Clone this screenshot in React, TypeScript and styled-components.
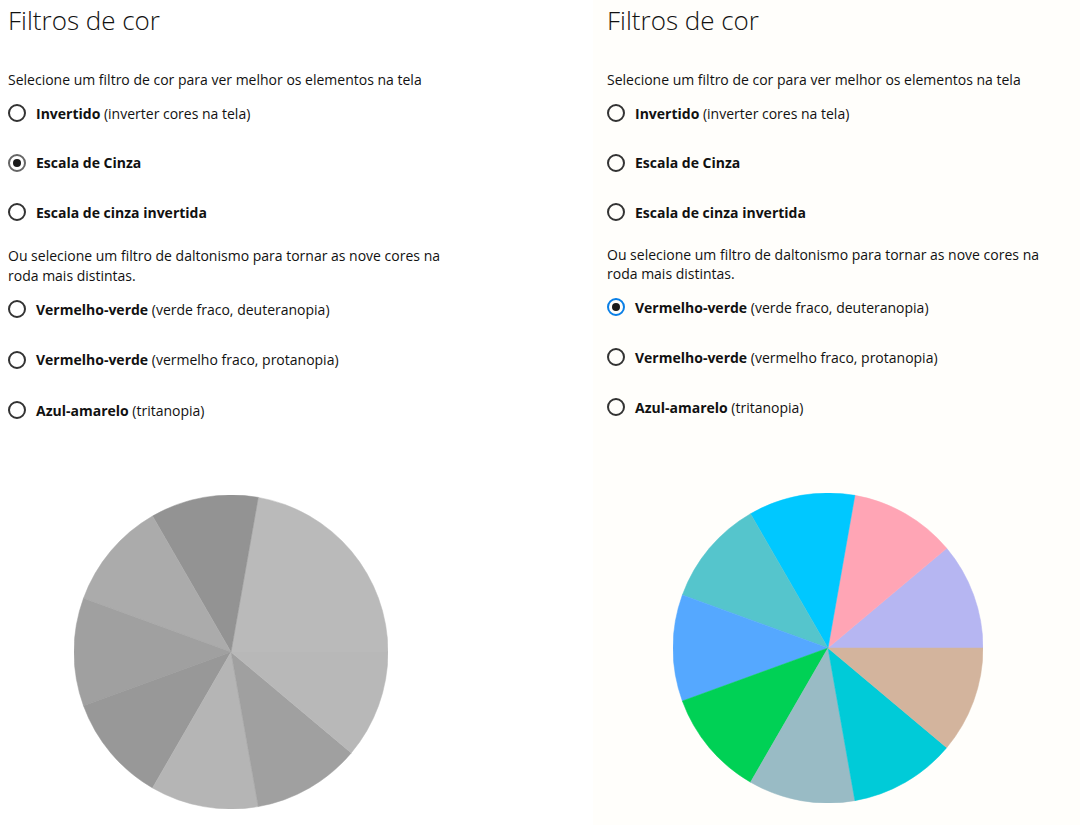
import styled, { createGlobalStyle } from 'styled-components'

const GlobalStyle = createGlobalStyle`
  html, body {
    margin: 0;
    padding: 0;
    background: #ffffff;
  }
  body {
    font-family: 'Open Sans', 'Noto Sans', sans-serif;
    color: #000000;
  }
`

type Slice = { color: string }

const colorSlices: Slice[] = [
  { color: '#b6b6f2' },
  { color: '#ffa5b5' },
  { color: '#00c8ff' },
  { color: '#55c5cc' },
  { color: '#55a8ff' },
  { color: '#00d155' },
  { color: '#99bbc5' },
  { color: '#00cbd8' },
  { color: '#d3b49d' },
]

// same wheel, seen through the grayscale filter
const graySlices: Slice[] = [
  { color: '#bababa' },
  { color: '#bababa' },
  { color: '#939393' },
  { color: '#ababab' },
  { color: '#a0a0a0' },
  { color: '#989898' },
  { color: '#b5b5b5' },
  { color: '#a0a0a0' },
  { color: '#b8b8b8' },
]

const Page = styled.main`
  display: flex;
  width: 1080px;
  height: 825px;
  overflow: hidden;
`

const Pane = styled.section<{ $bg: string; $width: number; $padLeft: number }>`
  display: flex;
  flex-direction: column;
  width: ${(p) => p.$width}px;
  padding-left: ${(p) => p.$padLeft}px;
  background: ${(p) => p.$bg};
  box-sizing: border-box;
`

const Title = styled.h1`
  margin: 0;
  font-size: 26px;
  font-weight: 300;
  line-height: 40px;
  color: #111111;
`

const Description = styled.p<{ $top: number; $lh: number }>`
  margin: ${(p) => p.$top}px 0 0;
  width: 450px;
  font-size: 14px;
  line-height: ${(p) => p.$lh}px;
  color: #111111;
`

const RadioList = styled.div<{ $top: number; $gap: number }>`
  display: flex;
  flex-direction: column;
  gap: ${(p) => p.$gap}px;
  margin-top: ${(p) => p.$top}px;
`

const RadioRow = styled.label`
  display: flex;
  align-items: center;
  gap: 10px;
  height: 20px;
  font-size: 14px;
  color: #111111;
`

const RadioCircle = styled.span<{ $checked: boolean; $accent: string }>`
  display: flex;
  align-items: center;
  justify-content: center;
  width: 18px;
  height: 18px;
  box-sizing: border-box;
  border-radius: 50%;
  border: 2px solid ${(p) => (p.$checked ? p.$accent : '#333333')};

  &::after {
    content: '';
    display: ${(p) => (p.$checked ? 'block' : 'none')};
    width: 8px;
    height: 8px;
    border-radius: 50%;
    background: #1a1a1a;
  }
`

const Strong = styled.b`
  font-weight: 700;
`

const PieWrap = styled.div<{ $top: number }>`
  margin-top: ${(p) => p.$top}px;
  margin-left: 66px;
`

function Pie({ slices, r }: { slices: Slice[]; r: number }) {
  const step = (2 * Math.PI) / slices.length
  // join neighbouring slices of one colour so no seam shows between them
  const runs: { color: string; from: number; to: number }[] = []
  slices.forEach((s, i) => {
    const last = runs[runs.length - 1]
    if (last && last.color === s.color) last.to = i + 1
    else runs.push({ color: s.color, from: i, to: i + 1 })
  })
  return (
    <svg width={r * 2} height={r * 2} viewBox={`0 0 ${r * 2} ${r * 2}`}>
      {runs.map((run, i) => {
        const a0 = run.from * step
        const a1 = run.to * step
        const x0 = r + r * Math.cos(a0)
        const y0 = r - r * Math.sin(a0)
        const x1 = r + r * Math.cos(a1)
        const y1 = r - r * Math.sin(a1)
        const large = a1 - a0 > Math.PI ? 1 : 0
        return (
          <path
            key={i}
            d={`M${r},${r} L${x0},${y0} A${r},${r} 0 ${large} 0 ${x1},${y1} Z`}
            fill={run.color}
            stroke={run.color}
            strokeWidth={0.5}
          />
        )
      })}
    </svg>
  )
}

type Option = { bold: string; rest?: string }

const colorOptions: Option[] = [
  { bold: 'Invertido', rest: ' (inverter cores na tela)' },
  { bold: 'Escala de Cinza' },
  { bold: 'Escala de cinza invertida' },
]

const blindOptions: Option[] = [
  { bold: 'Vermelho-verde', rest: ' (verde fraco, deuteranopia)' },
  { bold: 'Vermelho-verde', rest: ' (vermelho fraco, protanopia)' },
  { bold: 'Azul-amarelo', rest: ' (tritanopia)' },
]

function Options({
  items,
  selected,
  accent,
  top,
  gap,
}: {
  items: Option[]
  selected: number
  accent: string
  top: number
  gap: number
}) {
  return (
    <RadioList $top={top} $gap={gap}>
      {items.map((o, i) => (
        <RadioRow key={i}>
          <RadioCircle $checked={i === selected} $accent={accent} />
          <span>
            <Strong>{o.bold}</Strong>
            {o.rest}
          </span>
        </RadioRow>
      ))}
    </RadioList>
  )
}

function FilterPanel({
  bg,
  width,
  padLeft,
  colorSel,
  blindSel,
  accent,
  slices,
  r,
  lh,
  gap,
  pieTop,
}: {
  bg: string
  width: number
  padLeft: number
  colorSel: number
  blindSel: number
  accent: string
  slices: Slice[]
  r: number
  lh: number
  gap: number
  pieTop: number
}) {
  return (
    <Pane $bg={bg} $width={width} $padLeft={padLeft}>
      <Title>Filtros de cor</Title>
      <Description $top={30} $lh={20}>
        Selecione um filtro de cor para ver melhor os elementos na tela
      </Description>
      <Options
        items={colorOptions}
        selected={colorSel}
        accent={accent}
        top={13}
        gap={29.5}
      />
      <Description $top={24} $lh={lh}>
        Ou selecione um filtro de daltonismo para tornar as nove cores na roda
        mais distintas.
      </Description>
      <Options
        items={blindOptions}
        selected={blindSel}
        accent={accent}
        top={14}
        gap={gap}
      />
      <PieWrap $top={pieTop}>
        <Pie slices={slices} r={r} />
      </PieWrap>
    </Pane>
  )
}

export default function App() {
  return (
    <>
      <GlobalStyle />
      <Page>
        <FilterPanel
          bg="#ffffff"
          width={593}
          padLeft={8}
          colorSel={1}
          blindSel={-1}
          accent="#666666"
          slices={graySlices}
          r={157}
          lh={19.5}
          gap={30.5}
          pieTop={75}
        />
        <FilterPanel
          bg="#fffefb"
          width={487}
          padLeft={14}
          colorSel={-1}
          blindSel={0}
          accent="#0a7fe6"
          slices={colorSlices}
          r={155}
          lh={18.5}
          gap={30}
          pieTop={76}
        />
      </Page>
    </>
  )
}
